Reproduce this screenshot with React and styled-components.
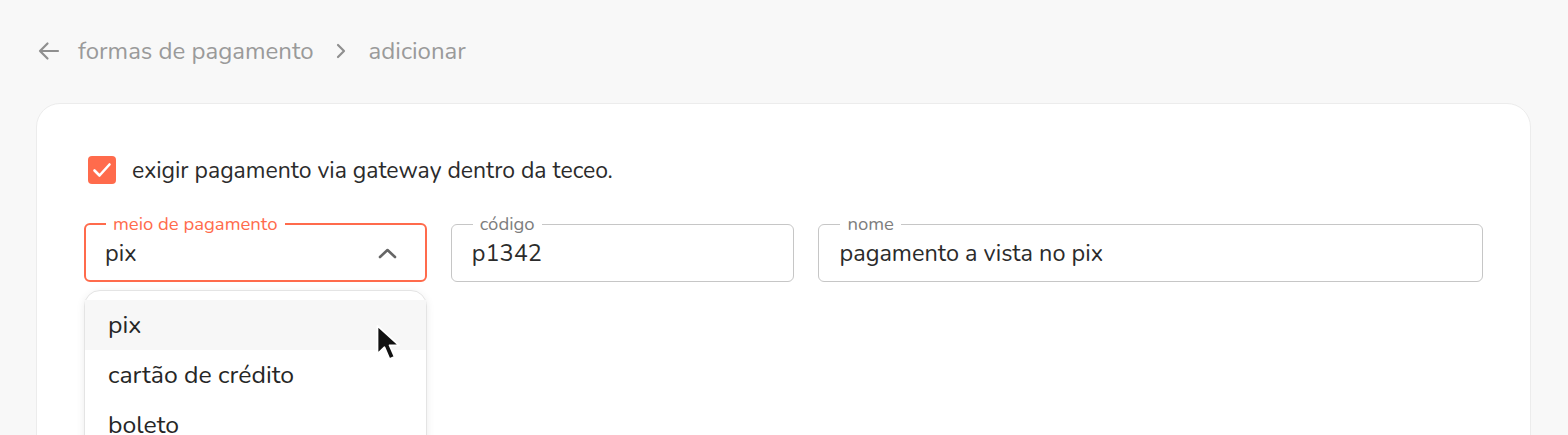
import React from "react";
import styled, { createGlobalStyle } from "styled-components";

const GlobalStyle = createGlobalStyle`
  html, body {
    margin: 0;
    padding: 0;
    background: #f8f8f8;
    font-family: "Nunito", "Noto Sans", "Open Sans", sans-serif;
    overflow: hidden;
  }
`;

const Page = styled.div`
  padding: 36px 37px 0 36px;
`;

const Breadcrumb = styled.nav`
  display: flex;
  align-items: center;
  height: 30px;
  color: #9a9a9a;
  font-size: 24px;
`;

const Crumb = styled.span`
  margin-left: ${props => props.gap}px;
`;

const IconBox = styled.span`
  display: inline-flex;
  margin-left: ${props => props.gap || 0}px;
`;

const Card = styled.section`
  margin-top: 37px;
  background: #fff;
  border: 1px solid #ececec;
  border-radius: 24px;
  min-height: 500px;
  padding: 52px 47px 0 47px;
`;

const CheckRow = styled.label`
  display: flex;
  align-items: center;
  gap: 16px;
  height: 28px;
  margin-left: 4px;
  font-size: 23px;
  color: #2b2b2b;
`;

const CheckBox = styled.span`
  flex: none;
  width: 28px;
  height: 28px;
  border-radius: 4px;
  background: #ff6b4c;
  display: flex;
  align-items: center;
  justify-content: center;
`;

const FieldRow = styled.div`
  display: grid;
  grid-template-columns: 343fr 344fr 665fr;
  gap: 24px;
  margin-top: 30px;
`;

const FieldWrap = styled.div`
  position: relative;
`;

const Field = styled.fieldset`
  margin: 0;
  min-width: 0;
  border: ${props => (props.active ? "2px solid #ff6b4c" : "1px solid #c6c6c6")};
  border-radius: 6px;
  padding: 0 ${props => (props.active ? 19 : 20)}px
    ${props => (props.active ? 8 : 9)}px;
`;

const Legend = styled.legend`
  padding: 0 7px;
  margin-left: 1px;
  font-size: 18.5px;
  line-height: 20px;
  color: ${props => (props.active ? "#ff6b4c" : "#7d7d7d")};
`;

const Value = styled.div`
  height: 38px;
  display: flex;
  align-items: center;
  justify-content: space-between;
  padding-right: ${props => props.pr || 0}px;
  font-size: 23.5px;
  color: #2b2b2b;
`;

const Menu = styled.ul`
  position: absolute;
  top: 76px;
  left: 0;
  right: 0;
  margin: 0;
  padding: 9px 0 0;
  list-style: none;
  background: #fff;
  border: 1px solid #e4e4e4;
  border-radius: 16px;
  box-shadow: 0 2px 8px rgba(0, 0, 0, 0.08);
  height: 200px;
`;

const Option = styled.li`
  position: relative;
  height: 50px;
  display: flex;
  align-items: center;
  padding-left: 23px;
  font-size: 24.8px;
  color: #262626;
  background: ${props => (props.hover ? "#f7f7f7" : "transparent")};
`;

const Pointer = styled.svg`
  position: absolute;
  left: 290px;
  top: 24px;
`;

const ArrowLeft = () => (
  <svg width="24" height="24" viewBox="0 0 24 24" fill="none" stroke="#8f8f8f" strokeWidth="2.2" strokeLinecap="round" strokeLinejoin="round">
    <path d="M21 12H3M10.5 4.5L3 12l7.5 7.5" />
  </svg>
);

const ChevronRight = () => (
  <svg width="14" height="18" viewBox="0 0 14 18" fill="none" stroke="#8f8f8f" strokeWidth="2.2" strokeLinecap="round" strokeLinejoin="round">
    <path d="M4 3l6 6-6 6" />
  </svg>
);

const ChevronUp = () => (
  <svg width="19" height="11" viewBox="0 0 19 11" fill="none" stroke="#666" strokeWidth="2.6" strokeLinecap="round" strokeLinejoin="round">
    <path d="M2 9l7.5-7 7.5 7" />
  </svg>
);

const Check = () => (
  <svg width="20" height="16" viewBox="0 0 20 16" fill="none" stroke="#fff" strokeWidth="2.6" strokeLinecap="round" strokeLinejoin="round">
    <path d="M2.5 8.5l5 5L17.5 2.5" />
  </svg>
);

const options = ["pix", "cartão de crédito", "boleto"];

export default function App() {
  return (
    <>
      <GlobalStyle />
      <Page>
        <Breadcrumb>
          <IconBox gap={1}>
            <ArrowLeft />
          </IconBox>
          <Crumb gap={17}>formas de pagamento</Crumb>
          <IconBox gap={20}>
            <ChevronRight />
          </IconBox>
          <Crumb gap={21}>adicionar</Crumb>
        </Breadcrumb>

        <Card>
          <CheckRow>
            <CheckBox>
              <Check />
            </CheckBox>
            exigir pagamento via gateway dentro da teceo.
          </CheckRow>

          <FieldRow>
            <FieldWrap>
              <Field active>
                <Legend active>meio de pagamento</Legend>
                <Value pr={9}>
                  pix
                  <ChevronUp />
                </Value>
              </Field>
              <Menu>
                {options.map((o, i) => (
                  <Option key={o} hover={i === 0}>
                    {o}
                    {i === 0 && (
                      <Pointer width="30" height="40" viewBox="0 0 24 32">
                        <path
                          d="M2 1.5v22.5l5.6-5.4 4 9.4 4-1.8-4-9.2h7.6z"
                          fill="#111"
                          stroke="#fff"
                          strokeWidth="1.4"
                          strokeLinejoin="round"
                        />
                      </Pointer>
                    )}
                  </Option>
                ))}
              </Menu>
            </FieldWrap>
            <Field>
              <Legend>código</Legend>
              <Value>p1342</Value>
            </Field>
            <Field>
              <Legend>nome</Legend>
              <Value>pagamento a vista no pix</Value>
            </Field>
          </FieldRow>
        </Card>
      </Page>
    </>
  );
}
